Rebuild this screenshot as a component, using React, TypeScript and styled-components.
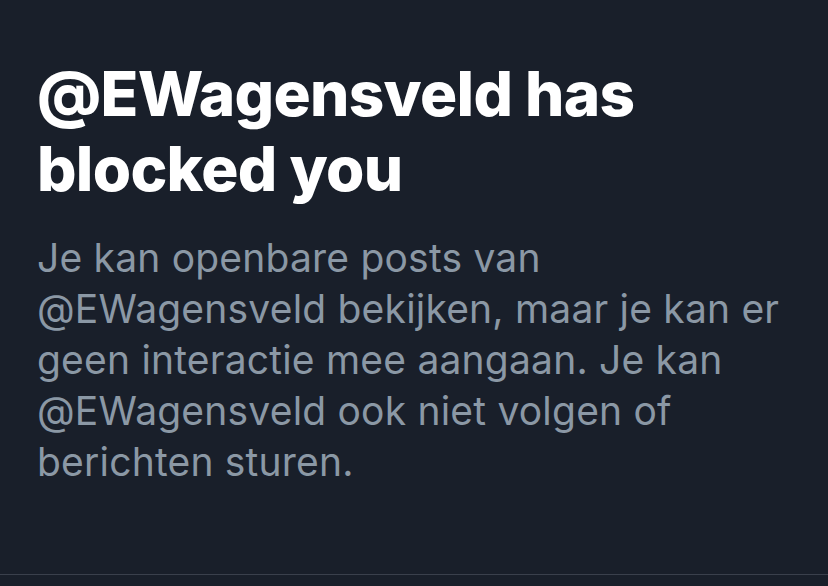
import styled, { createGlobalStyle } from "styled-components";

const GlobalStyle = createGlobalStyle`
  html, body {
    margin: 0;
    padding: 0;
    background: #191f2a;
  }
`;

const Page = styled.div`
  width: 828px;
  height: 586px;
  background: #191f2a;
  display: flex;
  flex-direction: column;
  font-family: Inter, "Liberation Sans", sans-serif;
  overflow: hidden;
`;

const Content = styled.div`
  flex: 1;
  padding: 56px 0 0 37px;
`;

const Title = styled.h1`
  margin: 0;
  color: #ffffff;
  font-size: 62px;
  font-weight: 800;
  line-height: 75px;
  letter-spacing: -0.7px;
  white-space: nowrap;
`;

const Body = styled.p`
  margin: 26px 0 0;
  color: #8b98a5;
  font-size: 39px;
  font-weight: 400;
  line-height: 51px;
  letter-spacing: 0.2px;
  white-space: nowrap;
`;

const Divider = styled.div`
  height: 1px;
  background: #3a404c;
  margin-bottom: 11px;
`;

const App = () => {
  return (
    <Page>
      <GlobalStyle />
      <Content>
        <Title>
          @EWagensveld has
          <br />
          blocked you
        </Title>
        <Body>
          Je kan openbare posts van
          <br />
          @EWagensveld bekijken, maar je kan er
          <br />
          geen interactie mee aangaan. Je kan
          <br />
          @EWagensveld ook niet volgen of
          <br />
          berichten sturen.
        </Body>
      </Content>
      <Divider />
    </Page>
  );
};

export default App;
